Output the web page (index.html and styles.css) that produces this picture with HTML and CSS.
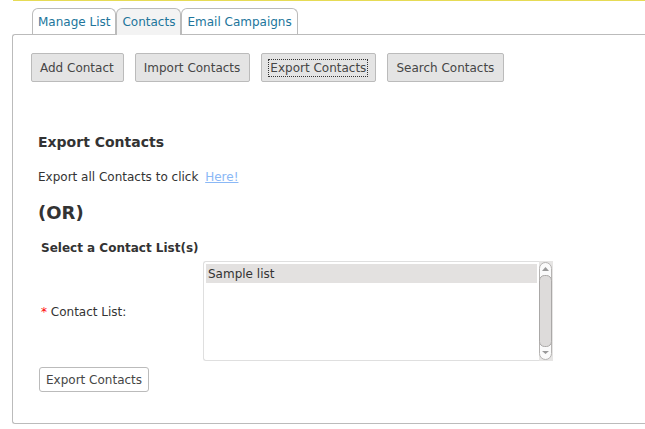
FILE: index.html
```html
<!DOCTYPE html>
<html lang="en">
<head>
<meta charset="utf-8">
<title>Export Contacts</title>
<link rel="stylesheet" href="styles.css">
</head>
<body>
<div class="notice"></div>
<nav class="tabs">
  <a class="tab" href="#manage">Manage List</a>
  <a class="tab active" href="#contacts">Contacts</a>
  <a class="tab" href="#campaigns">Email Campaigns</a>
</nav>
<main class="panel">
  <div class="toolbar">
    <button type="button" class="tool">Add Contact</button>
    <button type="button" class="tool">Import Contacts</button>
    <button type="button" class="tool"><span class="focused">Export Contacts</span></button>
    <button type="button" class="tool">Search Contacts</button>
  </div>
  <form class="export">
    <h3 class="title">Export Contacts</h3>
    <p class="all">Export all Contacts to click <a class="here" href="#all">Here!</a></p>
    <h2 class="or">(OR)</h2>
    <h4 class="legend">Select a Contact List(s)</h4>
    <div class="field">
      <label class="label" for="lists"><span class="required">*</span> Contact List:</label>
      <div class="listbox">
        <select class="list" id="lists" multiple size="5">
          <option class="item" selected>Sample list</option>
        </select>
        <svg class="scrollbar" width="14" height="100" viewBox="0 0 14 100" aria-hidden="true">
          <rect class="track" width="14" height="100"/>
          <rect class="cap" x="0.5" y="1.5" width="12" height="97" rx="6"/>
          <rect class="thumb" x="0.5" y="14.5" width="12" height="71" rx="5"/>
          <path class="arrow" d="M3 10h7L6.500 6zM3 90h7l-3.500 3z"/>
        </svg>
      </div>
    </div>
    <button type="button" class="submit">Export Contacts</button>
  </form>
</main>
</body>
</html>
```
FILE: styles.css
```css
* {
  box-sizing: border-box;
}

body {
  margin: 0;
  padding-left: 12px;
  overflow-x: hidden;
  background: #fff;
  color: #333;
  font: 12px/18px "DejaVu Sans", sans-serif;
}

h2, h3, h4, p {
  margin: 0;
}

button, select {
  font: inherit;
}

.notice {
  height: 1px;
  margin-left: 1px;
  background: #e6db55;
}

.tabs {
  display: flex;
  margin: 7px 0 0 20px;
}

.tab {
  height: 26px;
  padding: 4px 5px;
  border: 1px solid #bbb;
  border-bottom: 0;
  border-radius: 6px 6px 0 0;
  color: #21759b;
  text-decoration: none;
}

.active {
  position: relative;
  height: 27px;
  margin-bottom: -1px;
  background: #f3f3f3;
}

.panel {
  padding: 18px 18px 31px;
  border: 1px solid #bbb;
  border-right: 0;
  border-radius: 3px 0 0 3px;
}

.toolbar {
  display: flex;
  gap: 11px;
}

.tool {
  height: 29px;
  padding: 0 9px 0 8px;
  border: 1px solid #bbb;
  border-radius: 2px;
  background: #e4e4e4;
  color: #464646;
}

.focused {
  outline: 1px dotted #333;
  outline-offset: 1px;
}

.export {
  padding: 51px 0 0 7px;
}

.title {
  font-size: 14px;
}

.all {
  margin-top: 17px;
}

.here {
  margin-left: 3px;
  color: #8ab8f6;
}

.or {
  margin-top: 16px;
  font-size: 18px;
  line-height: 22px;
}

.legend {
  margin: 15px 0 0 3px;
  font-size: 12px;
}

.field {
  display: flex;
  align-items: center;
  margin: 4px 0 6px 3px;
}

.label {
  width: 162px;
  padding-top: 1px;
}

.required {
  color: #f00;
}

.listbox {
  display: flex;
}

.list {
  width: 336px;
  height: 100px;
  padding: 2px;
  overflow: hidden;
  border: 1px solid #dfdfdf;
  border-right: 0;
  border-radius: 3px 0 0 3px;
  outline: 0;
  background: #fff;
  color: #333;
}

.item {
  height: 19px;
  min-height: 19px;
  padding: 3px 2px 0;
  line-height: 16px;
}

.item:checked {
  background: #e3e1e0 linear-gradient(#e3e1e0, #e3e1e0);
  color: #333;
}

.scrollbar {
  display: block;
}

.track {
  fill: #e6e5e4;
}

.cap {
  fill: #fafafa;
  stroke: #b5b3b2;
}

.thumb {
  fill: #dddbda;
  stroke: #aaa8a7;
}

.arrow {
  fill: #999;
}

.submit {
  display: block;
  height: 25px;
  margin-left: 1px;
  padding: 0 6px;
  border: 1px solid #bbb;
  border-radius: 3px;
  background: #fff;
  color: #464646;
}
```
